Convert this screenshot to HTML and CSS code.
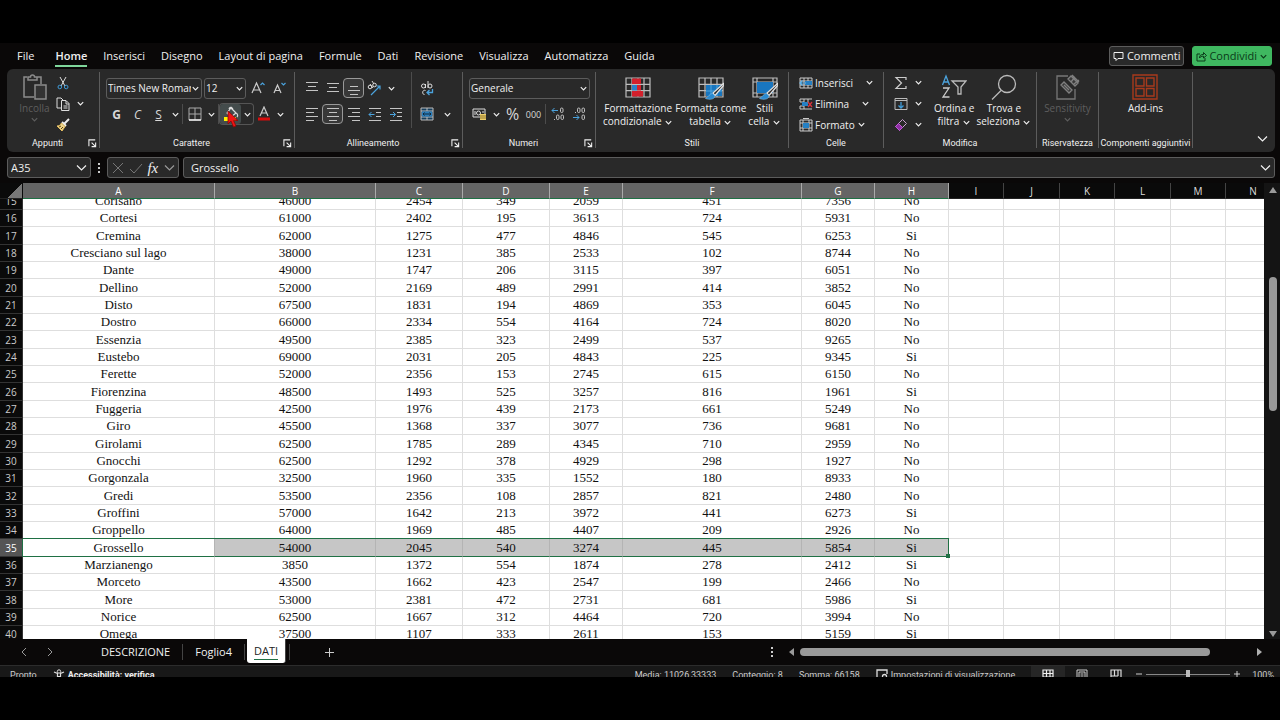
FILE: index.html
```html
<!DOCTYPE html>
<html lang="it">
<head>
    <meta charset="UTF-8">
    <meta name="viewport" content="width=device-width, initial-scale=1.0">
    <title>DATI - Excel</title>
    <link rel="stylesheet" href="styles.css">
</head>
<body>
    <!-- Shared icons -->
    <svg class="sprite" aria-hidden="true">
        <symbol id="chev" viewBox="0 0 10 10"><path d="M2 3.500l3 3 3-3" fill="none" stroke="currentColor" stroke-width="1.300"/></symbol>
        <symbol id="chev-lg" viewBox="0 0 13 13"><path d="M2 4.500l4.500 4.500L11 4.500" fill="none" stroke="currentColor" stroke-width="1.200"/></symbol>
        <symbol id="launch" viewBox="0 0 10 10"><path d="M1 8V1h7M4 4l4 4M8.500 4v4.500H4" fill="none" stroke="currentColor" stroke-width="1.200"/></symbol>
        <symbol id="table" viewBox="0 0 26 22"><path d="M1 1h24v19H1zM1 7.300h24M1 13.700h24M7 1v19M13 1v19M19 1v19" fill="none" stroke="#bdbdbd" stroke-width="1.200"/></symbol>
        <symbol id="brush" viewBox="0 0 20 18"><path d="M18.500 1.500L8 11l2 2.500L19 3z" fill="#2b2b2b" stroke="#e4e4e4" stroke-width="1.200"/><path d="M7.500 11.500c-3 0-3.500 3-7 5 4 1.500 9 1 9.500-2.500z" fill="#2a8ad0" stroke="#7cc0ee" stroke-width=".6"/></symbol>
    </svg>

    <div class="app">
        <header class="menu-bar">
            <nav class="menu">
                <a href="#" class="file">File</a>
                <a href="#" class="active">Home</a>
                <a href="#">Inserisci</a>
                <a href="#">Disegno</a>
                <a href="#">Layout di pagina</a>
                <a href="#">Formule</a>
                <a href="#">Dati</a>
                <a href="#">Revisione</a>
                <a href="#">Visualizza</a>
                <a href="#">Automatizza</a>
                <a href="#">Guida</a>
            </nav>
            <button class="top-btn">
                <svg width="11" height="11" viewBox="0 0 11 11"><path d="M1 1.500h9v6H5L3 9.500v-2H1z" fill="none" stroke="currentColor"/></svg>
                Commenti
            </button>
            <button class="top-btn share">
                <svg width="11" height="11" viewBox="0 0 11 11"><path d="M4 3H1v7h8V7M3.500 7c0-3 1.500-3.500 4-3.500V1.500L10.500 4.500 7.500 7V5.200C5.500 5.200 4.500 5.500 3.500 7z" fill="none" stroke="currentColor"/></svg>
                Condividi
                <svg class="chev"><use href="#chev"/></svg>
            </button>
        </header>

        <section class="ribbon">
            <div class="group g-clip">
                <div class="tools">
                    <button class="big disabled">
                        <svg width="24" height="26" viewBox="0 0 24 26"><path d="M4 3H1v20h10M14 3h4v7M5 5V3h2.500a2 2 0 0 1 4 0H14v3H5z" fill="none" stroke="#8c8c8c" stroke-width="1.500"/><path d="M12 11h11v14H12z" fill="#333" stroke="#8c8c8c" stroke-width="1.500"/></svg>
                        Incolla
                        <svg class="chev"><use href="#chev"/></svg>
                    </button>
                    <div class="stack">
                        <button class="line" aria-label="Taglia"><svg width="14" height="14" viewBox="0 0 14 14"><path d="M4 1l5 9M10 1L5 10" stroke="#ddd" fill="none"/><circle cx="3.800" cy="11" r="1.800" fill="none" stroke="#3f9bd8"/><circle cx="10.200" cy="11" r="1.800" fill="none" stroke="#3f9bd8"/></svg></button>
                        <button class="line" aria-label="Copia"><svg width="14" height="14" viewBox="0 0 14 14"><path d="M5 11H1V1h4l2 2M5.500 3.500H10L13 6.500v7H5.500zM10 4v3h3M7.500 9h4M7.500 11h4" fill="none" stroke="#ddd"/></svg><svg class="chev"><use href="#chev"/></svg></button>
                        <button class="line" aria-label="Copia formato"><svg width="14" height="14" viewBox="0 0 14 14"><path d="M13 1L8 6" stroke="#eee" stroke-width="2"/><path d="M6 4l4 4" stroke="#eee" stroke-width="2"/><path d="M5.500 5L9 8.500 6 13 1 8c2 0 3.500-1 4.500-3z" fill="#f0d58a" stroke="#e8c060"/><path d="M3 9l2-1M5 11l2-2" stroke="#59430f"/></svg></button>
                    </div>
                </div>
                <div class="caption"><span>Appunti</span><button class="launcher" aria-label="Opzioni Appunti"><svg class="chev"><use href="#launch"/></svg></button></div>
            </div>

            <div class="group g-font">
                <div class="tools rows">
                    <div class="row">
                        <div class="select w-font"><select aria-label="Tipo di carattere"><option>Times New Roman</option></select><svg class="chev"><use href="#chev"/></svg></div>
                        <div class="select w-size"><select aria-label="Dimensione"><option>12</option></select><svg class="chev"><use href="#chev"/></svg></div>
                        <button class="tool" aria-label="Aumenta carattere"><svg width="15" height="14" viewBox="0 0 15 14"><path d="M1 12L5.500 2 10 12M2.500 9h6" fill="none" stroke="#ccc" stroke-width="1.200"/><path d="M9.500 4L11.500 2l2 2" fill="none" stroke="#4ba3dd" stroke-width="1.200"/></svg></button>
                        <button class="tool" aria-label="Riduci carattere"><svg width="15" height="14" viewBox="0 0 15 14"><path d="M2 12L5.500 4 9 12M3.200 9.500h4.600" fill="none" stroke="#ccc" stroke-width="1.200"/><path d="M9.500 2l2 2 2-2" fill="none" stroke="#4ba3dd" stroke-width="1.200"/></svg></button>
                    </div>
                    <div class="row">
                        <button class="tool bold">G</button>
                        <button class="tool italic">C</button>
                        <button class="tool underline">S</button>
                        <button class="drop" aria-label="Altre sottolineature"><svg class="chev"><use href="#chev"/></svg></button>
                        <span class="sep"></span>
                        <button class="tool" aria-label="Bordi"><svg width="14" height="14" viewBox="0 0 14 14"><path d="M1 1h12v12H1zM7 1v12M1 7h12" fill="none" stroke="#aaa"/><path d="M1 13h12" stroke="#eee" stroke-width="1.500"/></svg></button>
                        <button class="drop" aria-label="Altri bordi"><svg class="chev"><use href="#chev"/></svg></button>
                        <span class="sep"></span>
                        <div class="split">
                            <button class="tool hover" aria-label="Colore riempimento"><svg width="16" height="16" viewBox="0 0 16 16"><path d="M4 7l4-5 5 5-5 4zM6 3c1-3 4-2 4 2M13 7c2 1 2 3 1 4" fill="none" stroke="#ddd" stroke-width="1.200"/><path d="M1 11h12v4H1z" fill="#ffef00"/></svg></button>
                            <button class="drop" aria-label="Altri colori"><svg class="chev"><use href="#chev"/></svg></button>
                            <svg class="pointer" width="12" height="18" viewBox="0 0 12 18"><path d="M1 1v13l3-3 2.500 6 2.500-1-2.500-5.500H11z" fill="#f01414" stroke="#8a0808" stroke-width=".8"/></svg>
                        </div>
                        <button class="tool" aria-label="Colore carattere"><svg width="14" height="16" viewBox="0 0 14 16"><path d="M3 10L7 1l4 9M4.300 7h5.400" fill="none" stroke="#ccc" stroke-width="1.200"/><path d="M1 11.500h12v3H1z" fill="#d80d0d"/></svg></button>
                        <button class="drop" aria-label="Altri colori carattere"><svg class="chev"><use href="#chev"/></svg></button>
                    </div>
                </div>
                <div class="caption"><span>Carattere</span><button class="launcher" aria-label="Opzioni Carattere"><svg class="chev"><use href="#launch"/></svg></button></div>
            </div>

            <div class="group g-align">
                <div class="tools">
                    <div class="rows">
                        <div class="row">
                            <button class="tool" aria-label="Allinea in alto"><svg class="ic" viewBox="0 0 14 14"><path d="M1 1.500h12M3 5.500h8M1 9.500h12"/></svg></button>
                            <button class="tool" aria-label="Allinea al centro verticale"><svg class="ic" viewBox="0 0 14 14"><path d="M1 2.500h12M3 6.500h8M1 10.500h12"/></svg></button>
                            <button class="tool on" aria-label="Allinea in basso"><svg class="ic" viewBox="0 0 14 14"><path d="M3 5.500h8M1 9.500h12M3 13.500h8"/></svg></button>
                            <button class="tool" aria-label="Orientamento"><svg width="15" height="15" viewBox="0 0 15 15"><g fill="none" stroke="#ddd"><circle cx="3" cy="6" r="1.800"/><path d="M3 3l3 4"/><circle cx="7.500" cy="4" r="1.800"/><path d="M5 0l2 3"/></g><path d="M4 14l9-9M9.500 5H13v3.500" fill="none" stroke="#4ba3dd" stroke-width="1.200"/></svg></button>
                            <button class="drop" aria-label="Altri orientamenti"><svg class="chev"><use href="#chev"/></svg></button>
                        </div>
                        <div class="row">
                            <button class="tool" aria-label="Allinea a sinistra"><svg class="ic" viewBox="0 0 14 14"><path d="M1 1.500h12M1 5.500h8M1 9.500h12M1 13.500h8"/></svg></button>
                            <button class="tool on" aria-label="Centra"><svg class="ic" viewBox="0 0 14 14"><path d="M1 1.500h12M3 5.500h8M1 9.500h12M3 13.500h8"/></svg></button>
                            <button class="tool" aria-label="Allinea a destra"><svg class="ic" viewBox="0 0 14 14"><path d="M1 1.500h12M5 5.500h8M1 9.500h12M5 13.500h8"/></svg></button>
                            <button class="tool" aria-label="Riduci rientro"><svg class="ic" viewBox="0 0 14 14"><path d="M1 1.500h12M8 5.500h5M8 9.500h5M1 13.500h12"/><path class="blue" d="M6.500 7.500H1M3.500 5L1 7.500 3.500 10"/></svg></button>
                            <button class="tool" aria-label="Aumenta rientro"><svg class="ic" viewBox="0 0 14 14"><path d="M1 1.500h12M8 5.500h5M8 9.500h5M1 13.500h12"/><path class="blue" d="M1 7.500h5.500M4 5l2.500 2.500L4 10"/></svg></button>
                        </div>
                    </div>
                    <span class="sep tall"></span>
                    <div class="rows">
                        <div class="row">
                            <button class="tool" aria-label="Testo a capo"><svg width="14" height="15" viewBox="0 0 14 15"><g fill="none" stroke="#ddd"><circle cx="3.500" cy="5" r="2"/><path d="M5.500 3v4M8 0v7M5.500 9.500c-3-1.500-4 4-1 4"/><circle cx="10" cy="5" r="2"/></g><path d="M12.500 8v3.500H7M9.500 9L7 11.500 9.500 14" fill="none" stroke="#4ba3dd" stroke-width="1.300"/></svg></button>
                        </div>
                        <div class="row">
                            <button class="tool" aria-label="Unisci e centra"><svg width="14" height="14" viewBox="0 0 14 14"><path d="M1 1h12v12H1z" fill="#173f5c" stroke="#bbb"/><path d="M7 1v3M7 10v3M1 4h12M1 10h12" stroke="#bbb"/><path d="M2 4.500h10v5H2z" fill="#2a7fbd"/><path d="M3 7h8M4.500 5.500L3 7l1.500 1.500M9.500 5.500L11 7 9.500 8.500" fill="none" stroke="#10293b"/></svg></button>
                            <button class="drop wide" aria-label="Altre unioni"><svg class="chev"><use href="#chev"/></svg></button>
                        </div>
                    </div>
                </div>
                <div class="caption"><span>Allineamento</span><button class="launcher" aria-label="Opzioni Allineamento"><svg class="chev"><use href="#launch"/></svg></button></div>
            </div>

            <div class="group g-num">
                <div class="tools rows">
                    <div class="row">
                        <div class="select w-num"><select aria-label="Formato numero"><option>Generale</option></select><svg class="chev"><use href="#chev"/></svg></div>
                    </div>
                    <div class="row">
                        <button class="tool" aria-label="Formato contabilità"><svg width="15" height="14" viewBox="0 0 15 14"><path d="M1 2h12v8H1zM3 4v4M11 4v2" fill="none" stroke="#ddd"/><circle cx="6.500" cy="6" r="2" fill="none" stroke="#ddd"/><path d="M8 7h6v6H8z" fill="#efd06b"/><path d="M8 9h6M8 11h6" stroke="#6b5414" stroke-width=".7"/></svg></button>
                        <button class="drop" aria-label="Altre valute"><svg class="chev"><use href="#chev"/></svg></button>
                        <button class="tool percent">%</button>
                        <button class="tool zeros">000</button>
                        <span class="sep"></span>
                        <button class="tool" aria-label="Aumenta decimali"><svg class="ic" viewBox="0 0 14 14"><rect x="9.500" y="1" width="2.500" height="4.500" rx="1.200"/><rect x="5.500" y="8" width="2.500" height="4.500" rx="1.200"/><rect x="10" y="8" width="2.500" height="4.500" rx="1.200"/><path d="M3.500 12v1"/><path class="blue" d="M7 3.500H1M3.500 1L1 3.500 3.500 6"/></svg></button>
                        <button class="tool" aria-label="Diminuisci decimali"><svg class="ic" viewBox="0 0 14 14"><rect x="5.500" y="1" width="2.500" height="4.500" rx="1.200"/><rect x="10" y="1" width="2.500" height="4.500" rx="1.200"/><rect x="10" y="8" width="2.500" height="4.500" rx="1.200"/><path d="M3.500 5v1"/><path class="blue" d="M1 10.500h6M4.500 8L7 10.500 4.500 13"/></svg></button>
                    </div>
                </div>
                <div class="caption"><span>Numeri</span><button class="launcher" aria-label="Opzioni Numeri"><svg class="chev"><use href="#launch"/></svg></button></div>
            </div>

            <div class="group g-style">
                <div class="tools">
                    <button class="big">
                        <svg width="26" height="24" viewBox="0 0 26 24"><g transform="translate(0 2)"><use href="#table" width="26" height="22"/><path d="M7 1.500h9v5.500H7zM7 14h11v5.500H7z" fill="#d3202c"/><path d="M7 8h5v5.500H7z" fill="#2a7fc8"/><path d="M12 8h4v5.500h-4z" fill="#d3202c"/></g></svg>
                        Formattazione
                        <span>condizionale <svg class="chev"><use href="#chev"/></svg></span>
                    </button>
                    <button class="big">
                        <svg width="26" height="24" viewBox="0 0 26 24"><g transform="translate(0 2)"><use href="#table" width="26" height="22"/><path d="M8 8h16v11H8z" fill="#1976bf"/><path d="M13 8v11M19 8v11M8 14h16" stroke="#4fa5dd"/><use href="#brush" x="7" y="5" width="20" height="18"/></g></svg>
                        Formatta come
                        <span>tabella <svg class="chev"><use href="#chev"/></svg></span>
                    </button>
                    <button class="big">
                        <svg width="26" height="24" viewBox="0 0 26 24"><g transform="translate(0 2)"><path d="M1 1h24v19H1zM1 5h24M1 16h24M5 1v19M21 1v19" fill="none" stroke="#bdbdbd" stroke-width="1.200"/><path d="M5 5h16v11H5z" fill="#1976bf"/><use href="#brush" x="7" y="5" width="20" height="18"/></g></svg>
                        Stili
                        <span>cella <svg class="chev"><use href="#chev"/></svg></span>
                    </button>
                </div>
                <div class="caption"><span>Stili</span></div>
            </div>

            <div class="group g-cells">
                <div class="tools stack">
                    <button class="line"><svg width="14" height="12" viewBox="0 0 14 12"><path d="M1 1h12v10H1zM1 4h12M1 8h12M5 1v10M9 1v10" fill="none" stroke="#ccc"/><path d="M6 4h7v4H6z" fill="#2580c4"/><path d="M7 6H1M3.500 3.500L1 6l2.500 2.500" fill="none" stroke="#62b5ec" stroke-width="1.200"/></svg><span>Inserisci</span><svg class="chev"><use href="#chev"/></svg></button>
                    <button class="line"><svg width="14" height="12" viewBox="0 0 14 12"><path d="M1 1h12M1 11h12M1 1v3h4M1 11V8h4M5 1v10M9 1v3" fill="none" stroke="#ccc"/><path d="M3 4h6v4H3z" fill="#2580c4"/><path d="M9 4l4 5M13 4L9 9" stroke="#d8323b" stroke-width="1.300"/></svg><span>Elimina</span><svg class="chev"><use href="#chev"/></svg></button>
                    <button class="line"><svg width="14" height="14" viewBox="0 0 14 14"><path d="M1 2h12v11H1zM1 5h12M1 10h12M4 2v11M10 2v11M4 .5h6" fill="none" stroke="#ccc"/><path d="M4 5h6v5H4z" fill="#2580c4"/></svg><span>Formato</span><svg class="chev"><use href="#chev"/></svg></button>
                </div>
                <div class="caption"><span>Celle</span></div>
            </div>

            <div class="group g-edit">
                <div class="tools">
                    <div class="stack">
                        <button class="line" aria-label="Somma automatica"><svg width="14" height="14" viewBox="0 0 14 14"><path d="M12 4V1.500H2L7.500 7 2 12.500h10V10" fill="none" stroke="#ccc" stroke-width="1.200"/></svg><svg class="chev"><use href="#chev"/></svg></button>
                        <button class="line" aria-label="Riempimento"><svg width="14" height="14" viewBox="0 0 14 14"><path d="M1 1.500h12v11H1zM1 3.500h12" fill="none" stroke="#bbb"/><path d="M7 5v6M4.500 8.500L7 11l2.500-2.500" fill="none" stroke="#3f9bd8" stroke-width="1.300"/></svg><svg class="chev"><use href="#chev"/></svg></button>
                        <button class="line" aria-label="Cancella"><svg width="14" height="14" viewBox="0 0 14 14"><path d="M8.500 1.500l4 4-7 7-4-4z" fill="none" stroke="#c8a0d0"/><path d="M4.500 5.500l4 4-3 3-4-4z" fill="#8f2fa5" stroke="#c05ad6"/></svg><svg class="chev"><use href="#chev"/></svg></button>
                    </div>
                    <button class="big">
                        <svg width="26" height="26" viewBox="0 0 26 26"><path d="M1.500 11L5 2l3.500 9M2.700 8h4.600" fill="none" stroke="#4ba3dd" stroke-width="1.300"/><path d="M2 14h6l-6 9h6.500" fill="none" stroke="#ccc" stroke-width="1.300"/><path d="M11 7h14l-5 6v7h-3v-7z" fill="none" stroke="#bbb" stroke-width="1.300"/></svg>
                        Ordina e
                        <span>filtra <svg class="chev"><use href="#chev"/></svg></span>
                    </button>
                    <button class="big">
                        <svg width="26" height="26" viewBox="0 0 26 26"><circle cx="16" cy="10" r="8.500" fill="none" stroke="#bbb" stroke-width="1.300"/><path d="M10 16.500l-9 9" stroke="#bbb" stroke-width="1.300"/></svg>
                        Trova e
                        <span>seleziona <svg class="chev"><use href="#chev"/></svg></span>
                    </button>
                </div>
                <div class="caption"><span>Modifica</span></div>
            </div>

            <div class="group g-sens">
                <div class="tools">
                    <button class="big disabled">
                        <svg width="24" height="26" viewBox="0 0 24 26"><path d="M12 2H1v23h18V15" fill="none" stroke="#777" stroke-width="1.300"/><path d="M5 11l3-3 8 8-3 3zM8 11l5 5M12 5l3-3 7 7-3 3zM15 8l4-5M18 10l5-4M16 1l7 7" fill="#3a3a3a" stroke="#808080" stroke-width="1.300"/></svg>
                        Sensitivity
                        <svg class="chev"><use href="#chev"/></svg>
                    </button>
                </div>
                <div class="caption"><span>Riservatezza</span></div>
            </div>

            <div class="group g-add">
                <div class="tools">
                    <button class="big">
                        <svg width="26" height="26" viewBox="0 0 26 26"><path d="M1 1h24v24H1zM4 4h8v8H4zM14.500 4h7.500v8h-7.500zM4 14.500h8v7.500H4zM14.500 14.500h7.500v7.500h-7.500z" fill="none" stroke="#a83a1c" stroke-width="1.400"/></svg>
                        Add-ins
                    </button>
                </div>
                <div class="caption"><span>Componenti aggiuntivi</span></div>
            </div>

            <button class="collapse" aria-label="Comprimi barra"><svg class="chev lg"><use href="#chev-lg"/></svg></button>
        </section>

        <section class="formula-bar">
            <div class="field name-box"><input type="text" value="A35" aria-label="Casella nome"><svg class="chev lg"><use href="#chev-lg"/></svg></div>
            <span class="dots"></span>
            <div class="field fx-box">
                <button aria-label="Annulla"><svg width="12" height="12" viewBox="0 0 12 12"><path d="M1 1l10 10M11 1L1 11" stroke="#777"/></svg></button>
                <button aria-label="Invio"><svg width="14" height="12" viewBox="0 0 14 12"><path d="M1 7l4 4 8-9" fill="none" stroke="#777"/></svg></button>
                <button class="fx">fx</button>
                <svg class="chev lg dim"><use href="#chev-lg"/></svg>
            </div>
            <div class="field formula"><input type="text" value="Grossello" aria-label="Barra della formula"><svg class="chev lg"><use href="#chev-lg"/></svg></div>
        </section>

        <main class="workspace">
            <div class="sheet" id="sheet">
                <table>
                    <colgroup>
                        <col class="c-head"><col class="c-a"><col class="c-b"><col class="c-c"><col class="c-c"><col class="c-e"><col class="c-f"><col class="c-e"><col class="c-h">
                        <col class="c-i"><col class="c-j"><col class="c-i"><col class="c-j"><col class="c-i"><col class="c-i">
                    </colgroup>
                    <thead><tr id="letters"></tr></thead>
                    <tbody id="rows"></tbody>
                </table>
            </div>
            <div class="v-scroll">
                <svg width="10" height="8" viewBox="0 0 10 8"><path d="M5 1l4 6H1z" fill="#9a9a9a"/></svg>
                <div class="v-track"><div class="v-thumb"></div></div>
                <svg width="10" height="8" viewBox="0 0 10 8"><path d="M5 7l4-6H1z" fill="#9a9a9a"/></svg>
            </div>
        </main>

        <footer class="sheet-bar">
            <div class="pager">
                <button aria-label="Precedente"><svg width="6" height="10" viewBox="0 0 6 10"><path d="M5 1L1 5l4 4" fill="none" stroke="#999"/></svg></button>
                <button aria-label="Successivo"><svg width="6" height="10" viewBox="0 0 6 10"><path d="M1 1l4 4-4 4" fill="none" stroke="#999"/></svg></button>
            </div>
            <nav class="tabs">
                <a href="#">DESCRIZIONE</a>
                <a href="#">Foglio4</a>
                <a href="#" class="current"><span>DATI</span></a>
            </nav>
            <button class="add" aria-label="Nuovo foglio"><svg width="11" height="11" viewBox="0 0 11 11"><path d="M5.500 1v9M1 5.500h9" stroke="#ccc"/></svg></button>
            <div class="h-scroll">
                <span class="dots"></span>
                <svg width="8" height="10" viewBox="0 0 8 10"><path d="M1 5l5-4v8z" fill="#9a9a9a"/></svg>
                <div class="h-track"><div class="h-thumb"></div></div>
                <svg width="8" height="10" viewBox="0 0 8 10"><path d="M7 5L2 1v8z" fill="#b0b0b0"/></svg>
            </div>
        </footer>

        <footer class="status">
            <span class="ready">Pronto</span>
            <span class="access"><svg width="12" height="12" viewBox="0 0 12 12"><path d="M1 3l3.500 1.500V8L3 11M11 3L7.500 4.500V8L9 11M4.500 7.500h3" fill="none" stroke="#ddd" stroke-width="1.200"/><circle cx="6" cy="2.500" r="1.700" fill="none" stroke="#ddd"/></svg>Accessibilità: verifica</span>
            <div class="stats">
                <span>Media: 11026,33333</span>
                <span>Conteggio: 8</span>
                <span>Somma: 66158</span>
            </div>
            <span class="display"><svg width="12" height="12" viewBox="0 0 12 12"><path d="M6 9H1V1h10v4M3 11h3" fill="none" stroke="#ddd" stroke-width="1.300"/><circle cx="8.500" cy="7.500" r="2" fill="none" stroke="#ddd" stroke-width="1.300"/></svg>Impostazioni di visualizzazione</span>
            <div class="views">
                <button class="selected" aria-label="Normale"><svg width="12" height="12" viewBox="0 0 12 12"><path d="M1 1h10v10H1zM1 4.500h10M1 8h10M4.500 1v10M8 1v10" fill="none" stroke="#eee" stroke-width="1.200"/></svg></button>
                <button aria-label="Layout di pagina"><svg width="12" height="12" viewBox="0 0 12 12"><path d="M1 1h10v10H1zM3 3h6v8H3zM4.500 5h3M4.500 7h3M4.500 9h3" fill="none" stroke="#ccc"/></svg></button>
                <button aria-label="Anteprima interruzioni"><svg width="12" height="12" viewBox="0 0 12 12"><path d="M1 1h10v10H1zM4.500 1v6M8 1v6M1 7h7" fill="none" stroke="#ddd" stroke-width="1.200"/></svg></button>
            </div>
            <div class="zoom">
                <button aria-label="Riduci"><svg width="8" height="8" viewBox="0 0 8 8"><path d="M1 4h6" stroke="#ccc"/></svg></button>
                <input type="range" min="10" max="190" value="100" aria-label="Zoom">
                <button aria-label="Ingrandisci"><svg width="8" height="8" viewBox="0 0 8 8"><path d="M1 4h6M4 1v6" stroke="#ccc"/></svg></button>
                <span>100%</span>
            </div>
        </footer>
    </div>

    <script src="script.js"></script>
</body>
</html>
```

FILE: styles.css
```css
:root {
    --panel: #292929;
    --line: #5c5c5c;
    --text: #f0f0f0;
    --green: #1f7044;
    --ui: "Open Sans", "Noto Sans", sans-serif;
    --small: Roboto, "Open Sans", sans-serif;
}

* {
    margin: 0;
    padding: 0;
    box-sizing: border-box;
}

body {
    background: #000;
    color: var(--text);
    font-family: var(--ui);
    font-size: 10px;
    padding: 43px 0;
}

button,
input,
select {
    background: none;
    border: none;
    color: inherit;
    font: inherit;
    outline: none;
}

a {
    color: inherit;
    text-decoration: none;
}

svg {
    flex: none;
}

.sprite {
    position: absolute;
    width: 0;
    height: 0;
}

.chev {
    width: 9px;
    height: 9px;
}

.chev.lg {
    width: 13px;
    height: 13px;
}

.chev.dim {
    color: #999;
}

.app {
    display: flex;
    flex-direction: column;
    height: calc(100vh - 86px);
    background: #0a0808;
    overflow: hidden;
}

/* Menu */
.menu-bar {
    display: flex;
    align-items: center;
    gap: 8px;
    height: 26px;
    padding: 0 8px 0 17px;
    flex: none;
}

.menu {
    display: flex;
    flex: 1;
    gap: 16px;
    padding-top: 2px;
    font-size: 11px;
    line-height: 18px;
    white-space: nowrap;
}

.menu a {
    border-bottom: 2px solid transparent;
}

.menu .file {
    padding-right: 5px;
}

.menu .active {
    font-weight: 600;
    border-color: #7fd69b;
}

.top-btn {
    display: flex;
    align-items: center;
    gap: 3px;
    height: 20px;
    padding: 0 3px;
    font-size: 11px;
    line-height: 16px;
    background: #292929;
    border: 1px solid var(--line);
    border-radius: 3px;
}

.share {
    gap: 2px;
    background: #3fb860;
    border-color: #3fb860;
    color: #0b3a19;
}

/* Ribbon */
.ribbon {
    display: flex;
    height: 83px;
    margin: 0 5px 0 7px;
    padding: 3px 0 4px;
    background: var(--panel);
    border-radius: 6px;
    flex: none;
}

.group {
    display: flex;
    flex-direction: column;
    flex: none;
    border-right: 1px solid var(--line);
}

.g-clip { width: 93px; }
.g-font { width: 195px; }
.g-align { width: 168px; }
.g-num { width: 133px; }
.g-style { width: 193px; }
.g-cells { width: 95px; }
.g-edit { width: 153px; }
.g-sens { width: 62px; }
.g-add { width: 94px; }

.tools {
    display: flex;
    flex: 1;
    padding-left: 6px;
}

.g-style .tools,
.g-sens .tools,
.g-add .tools {
    padding: 0;
    justify-content: center;
}

.g-style .tools {
    gap: 2px;
}

.rows {
    display: flex;
    flex-direction: column;
    gap: 6px;
    padding-top: 6px;
}

.row {
    display: flex;
    align-items: center;
    height: 20px;
}

.tool {
    display: flex;
    align-items: center;
    justify-content: center;
    width: 21px;
    height: 20px;
    color: #d8d8d8;
    font-size: 12px;
    border-radius: 3px;
}

.tool.on {
    background: #383838;
    border: 1px solid #999;
    border-radius: 4px;
}

.tool.hover {
    background: #444c4c;
}

.bold { font-weight: bold; }
.italic { font-style: italic; }
.underline { text-decoration: underline; }
.percent { font-size: 16px; }
.zeros { font-size: 9px; }

.ic {
    width: 14px;
    height: 14px;
    fill: none;
    stroke: #c4c4c4;
}

.ic .blue {
    stroke: #4ba3dd;
}

.drop {
    display: flex;
    align-items: center;
    justify-content: center;
    width: 12px;
    height: 20px;
}

.drop.wide {
    width: 20px;
}

.sep {
    width: 1px;
    height: 20px;
    margin: 0 1px;
    background: #4c4c4c;
}

.sep.tall {
    height: 56px;
    margin: 0 4px 0 5px;
}

.split {
    display: flex;
    position: relative;
    border-radius: 3px;
    box-shadow: 0 0 0 1px #555;
}

.pointer {
    position: absolute;
    left: 7px;
    top: 6px;
}

.select {
    display: flex;
    align-items: center;
    height: 21px;
    padding-right: 1px;
    border: 1px solid var(--line);
    border-radius: 3px;
}

.select select {
    flex: 1;
    min-width: 0;
    height: 19px;
    padding-left: 1px;
    appearance: none;
}

.w-font { width: 96px; margin-right: 2px; }
.w-size { width: 42px; margin-right: 2px; }
.w-num { width: 121px; }

.big {
    display: flex;
    flex-direction: column;
    align-items: center;
    padding-top: 2px;
    line-height: 13px;
    white-space: nowrap;
}

.big > svg:first-child {
    height: 26px;
    margin-bottom: 2px;
}

.big .chev {
    vertical-align: middle;
}

.disabled {
    color: #5e5e5e;
}

.g-clip .big {
    width: 43px;
}

.stack {
    display: flex;
    flex-direction: column;
    align-items: flex-start;
}

.line {
    display: flex;
    align-items: center;
    gap: 3px;
    height: 21px;
    line-height: 14px;
}

.g-clip .line .chev,
.g-edit .line .chev {
    margin-left: 3px;
}

.g-cells .tools {
    padding-left: 10px;
}

.g-cells .line {
    gap: 2px;
}

.g-cells .line:not(:last-child) .chev {
    margin-left: 10px;
}

.g-edit .tools {
    padding-left: 10px;
    gap: 2px;
}

.g-edit .stack {
    margin-right: 9px;
}

.caption {
    display: flex;
    align-items: center;
    height: 10px;
    font: 9px/10px var(--small);
    white-space: nowrap;
}

.caption span {
    flex: 1;
    text-align: center;
}

.launcher {
    display: flex;
    width: 11px;
}

.collapse {
    margin: auto 6px 3px auto;
    height: 13px;
}

/* Formula bar */
.formula-bar {
    display: flex;
    align-items: center;
    height: 31px;
    padding: 0 5px 0 7px;
    gap: 4px;
    flex: none;
}

.field {
    display: flex;
    align-items: center;
    height: 21px;
    padding: 0 2px;
    background: var(--panel);
    border: 1px solid var(--line);
    border-radius: 3px;
    font-size: 11px;
}

.field input {
    flex: 1;
    min-width: 0;
    padding-left: 1px;
}

.name-box {
    width: 84px;
}

.dots {
    width: 2px;
    height: 10px;
    margin: 0 3px;
    background: repeating-linear-gradient(#ccc 0 2px, transparent 2px 4px);
}

.fx-box {
    width: 72px;
    justify-content: space-between;
    padding-left: 4px;
}

.fx-box button {
    display: flex;
}

.fx {
    font: italic 15px/16px "Liberation Serif", serif;
}

.formula {
    flex: 1;
}

.formula input {
    padding-left: 5px;
}

/* Sheet */
.workspace {
    display: flex;
    flex: 1;
    min-height: 0;
}

.sheet {
    flex: 1;
    min-width: 0;
    background: #fff;
    overflow: hidden;
}

table {
    table-layout: fixed;
    width: 1281px;
    border-collapse: separate;
    border-spacing: 0;
    font: 13px/16px "Liberation Serif", serif;
    color: #111;
    text-align: center;
}

.c-head { width: 23px; }
.c-a { width: 192px; }
.c-b { width: 161px; }
.c-c { width: 87px; }
.c-e { width: 73px; }
.c-f { width: 179px; }
.c-h { width: 74px; }
.c-i { width: 55px; }
.c-j { width: 56px; }

thead th {
    position: sticky;
    top: 0;
    z-index: 1;
    height: 16px;
    font: 10px/14px var(--ui);
    color: #ddd;
    background: #0a0a0a;
    border-right: 1px solid #444;
    border-bottom: 1px solid #222;
}

thead .picked {
    background: #656565;
    color: #fff;
    border-right-color: #aaa;
    border-bottom-color: var(--green);
}

thead .corner {
    background: linear-gradient(135deg, #0a0a0a 62%, #777 62%);
    border-right-color: #0a0a0a;
}

tbody tr {
    height: 17px;
}

tbody tr:nth-child(3n) {
    height: 18px;
}

tbody td {
    border-right: 1px solid #dedede;
    border-bottom: 1px solid #dedede;
    white-space: nowrap;
}

tbody th {
    font: 10px/16px var(--ui);
    color: #ccc;
    background: #0a0a0a;
    border-right: 1px solid #333;
    border-bottom: 1px solid #333;
}

.selected-row th {
    background: #555;
    color: #fff;
    border-right-color: var(--green);
}

.selected-row .cell {
    background: #c6c6c6;
    border-right-color: #b4b4b4;
    border-bottom-color: var(--green);
    box-shadow: 0 -1px 0 var(--green);
}

.selected-row .first {
    background: #fff;
}

.selected-row .last {
    position: relative;
    border-right-color: var(--green);
}

.selected-row .last::after {
    content: "";
    position: absolute;
    right: -2px;
    bottom: -2px;
    width: 4px;
    height: 4px;
    background: var(--green);
}

.v-scroll {
    display: flex;
    flex-direction: column;
    align-items: center;
    width: 16px;
    padding: 3px 0 1px 2px;
    background: #141414;
}

.v-track {
    flex: 1;
    padding-top: 83px;
}

.v-thumb {
    width: 8px;
    height: 31%;
    min-height: 134px;
    background: #999;
    border-radius: 4px;
}

/* Sheet tabs */
.sheet-bar {
    display: flex;
    align-items: center;
    height: 26px;
    font-size: 11px;
    flex: none;
}

.pager {
    display: flex;
    gap: 20px;
    width: 89px;
    padding-left: 21px;
}

.tabs {
    display: flex;
    align-items: center;
    align-self: stretch;
}

.tabs a {
    padding: 0 12px;
    line-height: 16px;
    border-right: 1px solid #444;
}

.tabs .current {
    align-self: flex-start;
    height: 24px;
    margin-left: 2px;
    padding: 4px 7px 0;
    color: #222;
    background: #fff;
    border-radius: 0 0 3px 3px;
}

.current span {
    display: block;
    border-bottom: 1px solid var(--green);
}

.add {
    display: flex;
    align-items: center;
    height: 16px;
    margin-left: 3px;
    padding-left: 34px;
    border-left: 1px solid #444;
}

.h-scroll {
    display: flex;
    align-items: center;
    width: 40%;
    min-width: 200px;
    margin-left: auto;
    padding-right: 17px;
    gap: 4px;
}

.h-scroll .dots {
    margin-right: 11px;
}

.h-track {
    flex: 1;
}

.h-thumb {
    width: 91%;
    height: 8px;
    background: #999;
    border-radius: 4px;
}

/* Status bar, cut by the lower window edge */
.status {
    display: flex;
    height: 12px;
    padding: 0 6px 0 10px;
    font: 9px/18px var(--small);
    color: #ccc;
    white-space: nowrap;
    background: #181818;
    border-top: 1px solid #2c2c2c;
    overflow: hidden;
    flex: none;
}

.status svg {
    margin-top: 3px;
}

.access,
.display {
    display: flex;
    gap: 3px;
}

.access {
    margin-left: 16px;
    font-weight: bold;
    color: #eee;
}

.stats {
    display: flex;
    gap: 16px;
    margin: 0 16px 0 auto;
}

.views {
    display: flex;
    margin-left: 16px;
}

.views button {
    width: 34px;
    height: 20px;
}

.views .selected {
    background: #262626;
}

.zoom {
    display: flex;
    align-items: flex-start;
    gap: 3px;
    margin-left: 2px;
}

.zoom button {
    height: 12px;
}

.zoom span {
    margin-left: 8px;
}

.zoom input {
    appearance: none;
    width: 84px;
    height: 17px;
    background: linear-gradient(#888, #888) center / 100% 1px no-repeat;
}

.zoom input::-webkit-slider-thumb {
    appearance: none;
    width: 4px;
    height: 9px;
    background: #bbb;
}
```

FILE: script.js
```js
const letters = ['A', 'B', 'C', 'D', 'E', 'F', 'G', 'H', 'I', 'J', 'K', 'L', 'M', 'N'];
const firstRow = 15;
const selectedRow = 35;

const data = [
    ['Corisano', 46000, 2454, 349, 2059, 451, 7356, 'No'],
    ['Cortesi', 61000, 2402, 195, 3613, 724, 5931, 'No'],
    ['Cremina', 62000, 1275, 477, 4846, 545, 6253, 'Si'],
    ['Cresciano sul lago', 38000, 1231, 385, 2533, 102, 8744, 'No'],
    ['Dante', 49000, 1747, 206, 3115, 397, 6051, 'No'],
    ['Dellino', 52000, 2169, 489, 2991, 414, 3852, 'No'],
    ['Disto', 67500, 1831, 194, 4869, 353, 6045, 'No'],
    ['Dostro', 66000, 2334, 554, 4164, 724, 8020, 'No'],
    ['Essenzia', 49500, 2385, 323, 2499, 537, 9265, 'No'],
    ['Eustebo', 69000, 2031, 205, 4843, 225, 9345, 'Si'],
    ['Ferette', 52000, 2356, 153, 2745, 615, 6150, 'No'],
    ['Fiorenzina', 48500, 1493, 525, 3257, 816, 1961, 'Si'],
    ['Fuggeria', 42500, 1976, 439, 2173, 661, 5249, 'No'],
    ['Giro', 45500, 1368, 337, 3077, 736, 9681, 'No'],
    ['Girolami', 62500, 1785, 289, 4345, 710, 2959, 'No'],
    ['Gnocchi', 62500, 1292, 378, 4929, 298, 1927, 'No'],
    ['Gorgonzala', 32500, 1960, 335, 1552, 180, 8933, 'No'],
    ['Gredi', 53500, 2356, 108, 2857, 821, 2480, 'No'],
    ['Groffini', 57000, 1642, 213, 3972, 441, 6273, 'Si'],
    ['Groppello', 64000, 1969, 485, 4407, 209, 2926, 'No'],
    ['Grossello', 54000, 2045, 540, 3274, 445, 5854, 'Si'],
    ['Marzianengo', 3850, 1372, 554, 1874, 278, 2412, 'Si'],
    ['Morceto', 43500, 1662, 423, 2547, 199, 2466, 'No'],
    ['More', 53000, 2381, 472, 2731, 681, 5986, 'Si'],
    ['Norice', 62500, 1667, 312, 4464, 720, 3994, 'No'],
    ['Omega', 37500, 1107, 333, 2611, 153, 5159, 'Si']
];

// Column letters
document.getElementById('letters').innerHTML = '<th class="corner"></th>' +
    letters.map((l, i) => `<th class="${i < 8 ? 'picked' : ''}">${l}</th>`).join('');

// Data rows
document.getElementById('rows').innerHTML = data.map((row, r) => {
    const number = firstRow + r;
    const cells = letters.map((l, i) => {
        if (i > 7) return '<td></td>';
        const edge = i === 0 ? ' first' : i === 7 ? ' last' : '';
        return `<td class="cell${edge}">${row[i]}</td>`;
    }).join('');
    return `<tr class="${number === selectedRow ? 'selected-row' : ''}"><th>${number}</th>${cells}</tr>`;
}).join('');

// First row is partly under the column letters
document.getElementById('sheet').scrollTop = 6;
```
